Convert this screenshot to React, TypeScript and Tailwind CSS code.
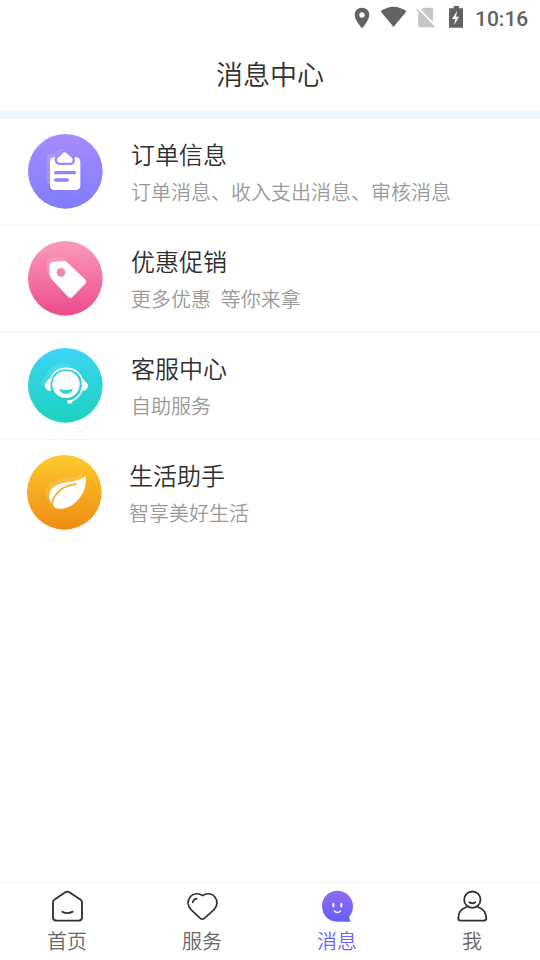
import { useState } from 'react'
import type { ReactNode } from 'react'
import clsx from 'clsx'

function OrderIcon() {
  return (
    <svg viewBox="24 27 225 225" className="h-[75px] w-[75px]">
      <defs>
        <linearGradient id="order" x1="0" y1="0" x2="0" y2="1">
          <stop offset="0" stopColor="#a78bfd" />
          <stop offset="1" stopColor="#7f7dfd" />
        </linearGradient>
      </defs>
      <circle cx="136" cy="139" r="112" fill="url(#order)" />
      <path d="M80 99q0-13 13-13h12q4-14 19-14t19 14h15l-12 92H92q-12 0-12-12z" fill="#fff" opacity=".15" />
      <rect x="90" y="97" width="91" height="98" rx="13" fill="#fff" />
      <path
        d="M116 89q5-12 18-12t18 12q13 3 13 14q0 17-15 17h-31q-15 0-15-17q0-11 12-14z"
        fill="#9c88fd"
      />
      <path d="M119 94q4-1 6-7q9-11 18 0q2 6 7 7q8 3 8 11t-8 8h-31q-8 0-8-8t8-11z" fill="#fff" />
      <path d="M107 143h56M107 165h35" stroke="#9382fd" strokeWidth="10" strokeLinecap="round" />
    </svg>
  )
}

function PromoIcon() {
  return (
    <svg viewBox="24 27 225 225" className="h-[75px] w-[75px]">
      <defs>
        <linearGradient id="promo" x1="0" y1="0" x2="0" y2="1">
          <stop offset="0" stopColor="#fa9bbb" />
          <stop offset="1" stopColor="#ec4b8b" />
        </linearGradient>
      </defs>
      <circle cx="136" cy="139" r="112" fill="url(#promo)" />
      <path d="M80 91q0-12 12-13l33-2q6 0 10 5l20 23-56 41-15-17q-4-4-4-10z" fill="#fff" opacity=".15" />
      <path
        d="M88 103q0-11 11-13l32-3q6-1 12 5l52 50q7 7 0 14l-37 38q-7 8-14 0L95 142q-6-6-6-13z"
        fill="#fff"
      />
      <circle cx="123" cy="121" r="13" fill="#f486ae" />
    </svg>
  )
}

function SupportIcon() {
  return (
    <svg viewBox="24 24 225 225" className="h-[75px] w-[75px]">
      <defs>
        <linearGradient id="support" x1="0" y1="0" x2="0" y2="1">
          <stop offset="0" stopColor="#3ed4f3" />
          <stop offset="1" stopColor="#1bd2bf" />
        </linearGradient>
      </defs>
      <circle cx="136" cy="136" r="112" fill="url(#support)" />
      <path d="M64 134q-2-12 11-20q14-42 55-44q20-1 34 12l-30 0q-36 4-46 40l-10 20q-10 0-14-8z" fill="#fff" opacity=".12" />
      <circle cx="138" cy="133" r="41" fill="#fff" />
      <path d="M117 146q21 8 42 0q-5 15-21 15t-21-15z" fill="#28d2d5" />
      <path d="M91 124c5-52 90-52 96 0q6 42-35 60" fill="none" stroke="#fff" strokeWidth="5" />
      <path d="M92 117v36q-9 1-14-7q-7-12 2-20q4-2 5-9z" fill="#fff" />
      <path d="M185 117h7q1 7 6 9q10 8 3 20q-5 7-15 7q5-18-1-36z" fill="#fff" />
      <ellipse cx="149" cy="185" rx="8" ry="6" fill="#fff" />
    </svg>
  )
}

function LifeIcon() {
  return (
    <svg viewBox="21 24 225 225" className="h-[75px] w-[75px]">
      <defs>
        <linearGradient id="life" x1="0" y1="0" x2="0" y2="1">
          <stop offset="0" stopColor="#fdca2f" />
          <stop offset="1" stopColor="#ef8b13" />
        </linearGradient>
      </defs>
      <circle cx="133" cy="136" r="112" fill="url(#life)" />
      <path d="M83 158c-14-24-4-47 20-56c28-13 65-5 84-26q3 7-1 16L94 158z" fill="#fff" opacity=".15" />
      <path
        d="M91 167c-8-27 0-45 22-54c29-12 63-6 84-27c3 26-4 52-24 74c-18 19-38 28-60 25q-12-2-14-14z"
        fill="#fff"
      />
      <path d="M94 176c7-37 28-59 74-65" fill="none" stroke="#f6a823" strokeWidth="5" strokeLinecap="round" />
    </svg>
  )
}

function HomeIcon() {
  return (
    <svg viewBox="63 45 96 96" className="h-8 w-8 overflow-visible" fill="none" stroke="#303030" strokeWidth="5.5" strokeLinecap="round" strokeLinejoin="round">
      <path d="M106 52q6-4 12 0l34 22q4 3 4 8v45q0 10-10 10H79q-10 0-10-10V82q0-5 4-8z" />
      <path d="M97 110q15 9 31 0" />
    </svg>
  )
}

function HeartIcon() {
  return (
    <svg viewBox="468 45 96 96" className="h-8 w-8 overflow-visible" fill="none" stroke="#303030" strokeWidth="5" strokeLinecap="round" strokeLinejoin="round">
      <path d="M518 62c-12-9-28-7-37 3c-10 12-9 28 2 39l28 26q6 5 12 0l29-26c11-11 12-27 2-39c-8-10-24-12-36-3z" />
      <path d="M488 82q2-9 12-11" />
    </svg>
  )
}

function MessageIcon() {
  return (
    <svg viewBox="63 45 96 96" className="h-8 w-8 overflow-visible">
      <defs>
        <linearGradient id="message" x1="0" y1="0" x2="0" y2="1">
          <stop offset="0" stopColor="#916cf4" />
          <stop offset="1" stopColor="#6560f8" />
        </linearGradient>
      </defs>
      <path d="M112 47c26 0 47 20 47 46c0 14-4 24-11 31c0 6 1 11 4 16h-40c-27 0-46-20-46-47c0-26 20-46 46-46z" fill="url(#message)" />
      <path d="M100 87v7M124 87v7" stroke="#fff" strokeWidth="6.5" strokeLinecap="round" />
      <path d="M103 108q9 9 19 0" fill="none" stroke="#fff" strokeWidth="4.5" strokeLinecap="round" />
    </svg>
  )
}

function UserIcon() {
  return (
    <svg viewBox="468 45 96 96" className="h-8 w-8 overflow-visible" fill="none" stroke="#303030" strokeWidth="5.5" strokeLinecap="round" strokeLinejoin="round">
      <circle cx="517" cy="74" r="24.5" />
      <path d="M508 82q9 6 18 0" />
      <path d="M500 96c-16 5-25 17-25 34q0 7 7 7h69q8 0 8-7c-1-17-10-29-25-34" />
    </svg>
  )
}

function StatusBar() {
  return (
    <div className="flex h-[37px] items-center justify-end pr-3 text-[#626262]">
      <svg viewBox="41 19 334 66" className="mb-1 h-[22px] w-[111px] overflow-visible">
        <path d="M65 24c-13 0-22 9-22 22c0 15 22 40 22 40s22-25 22-40c0-13-9-22-22-22z" fill="#626262" />
        <circle cx="65" cy="46" r="8" fill="#fff" />
        <path d="M121 35q39-28 78 0l-39 47z" fill="#626262" />
        <path d="M250 24h24q5 0 5 5v49q0 5-5 5h-36q-4 0-4-5V40z" fill="#c6c6c6" />
        <path d="M232 23l54 56" stroke="#fff" strokeWidth="6" />
        <path d="M229 28l54 56" stroke="#c6c6c6" strokeWidth="5" />
        <path d="M341 19h16v7h12v58h-42V26h14z" fill="#626262" />
        <path d="M351 34l-15 24h10l-4 19 15-26h-9z" fill="#fff" />
      </svg>
      <span className="ml-[10px] w-[53px] pt-px font-['Roboto'] text-[21px] font-medium leading-none">
        10:16
      </span>
    </div>
  )
}

interface Message {
  title: string
  desc: string
  icon: ReactNode
  className: string
}

const MESSAGES: Message[] = [
  { title: '订单信息', desc: '订单消息、收入支出消息、审核消息', icon: <OrderIcon />, className: 'gap-7 border-b-2 pl-7' },
  { title: '优惠促销', desc: '更多优惠  等你来拿', icon: <PromoIcon />, className: 'gap-7 border-b-2 pl-7' },
  { title: '客服中心', desc: '自助服务', icon: <SupportIcon />, className: 'gap-7 border-b-2 pl-7' },
  { title: '生活助手', desc: '智享美好生活', icon: <LifeIcon />, className: 'gap-[27px] pl-[27px]' },
]

const TABS = [
  { label: '首页', icon: <HomeIcon /> },
  { label: '服务', icon: <HeartIcon /> },
  { label: '消息', icon: <MessageIcon /> },
  { label: '我', icon: <UserIcon /> },
]

export default function App() {
  const [activeTab, setActiveTab] = useState('消息')

  return (
    <div className="flex h-[960px] w-[540px] flex-col bg-white font-['Roboto','Noto_Sans_CJK_SC',sans-serif] font-[350]">
      <StatusBar />

      {/* Header */}
      <header className="flex h-[82px] items-center justify-center border-b-8 border-[#f1f6fe] pt-[5px] text-[27px] text-[#2f2f2f]">
        <h1 className="font-[350]">消息中心</h1>
      </header>

      {/* Message list */}
      <main className="flex-1">
        {MESSAGES.map((m) => (
          <div key={m.title} className={clsx('flex h-[107px] items-start border-[#f3f6fc] pt-[15px]', m.className)}>
            {m.icon}
            <div className="pt-1">
              <h2 className="text-2xl font-[350] leading-9 text-[#2f2f2f]">{m.title}</h2>
              <p className="mt-px whitespace-pre text-xl leading-9 text-[#999]">{m.desc}</p>
            </div>
          </div>
        ))}
      </main>

      {/* Bottom tabs */}
      <nav className="grid h-[78px] grid-cols-4 border-t border-[#f0f1f5]">
        {TABS.map((tab) => (
          <button
            key={tab.label}
            onClick={() => setActiveTab(tab.label)}
            className={clsx(
              'flex flex-col items-center gap-px pt-[7px] pr-px text-xl leading-[38px]',
              activeTab === tab.label ? 'text-[#6c63f8]' : 'text-[#666]'
            )}
          >
            {tab.icon}
            <span>{tab.label}</span>
          </button>
        ))}
      </nav>
    </div>
  )
}
